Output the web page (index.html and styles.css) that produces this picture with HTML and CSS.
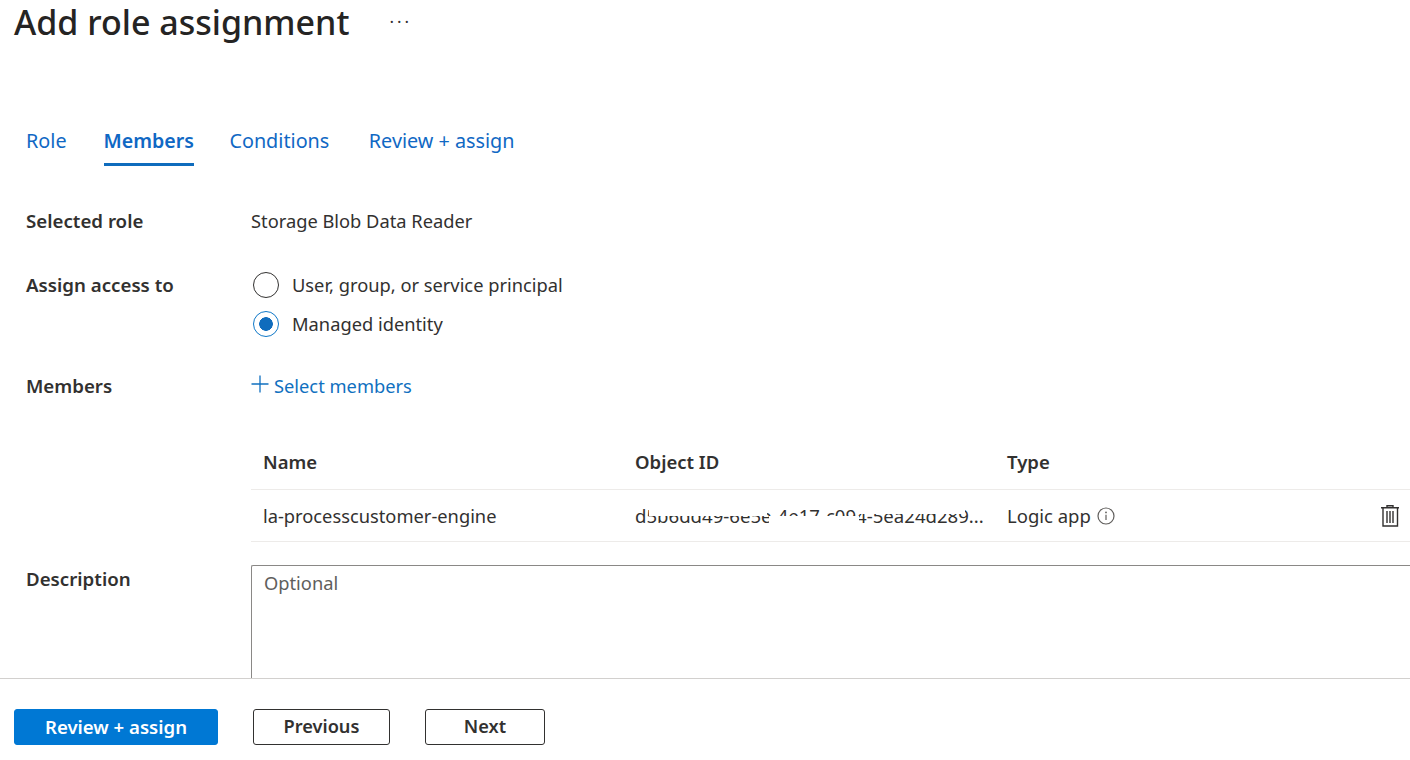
FILE: index.html
```html
<!DOCTYPE html>
<html lang="en">
<head>
<meta charset="utf-8">
<title>Add role assignment</title>
<link rel="stylesheet" href="styles.css">
</head>
<body>
<div class="page">
  <main class="main">
    <header class="title-row">
      <h1 class="title">Add role assignment</h1>
      <span class="more">···</span>
    </header>
    <nav class="tabs">
      <a class="tab">Role</a>
      <a class="tab active">Members</a>
      <a class="tab tab-conditions">Conditions</a>
      <a class="tab">Review + assign</a>
    </nav>
    <div class="form">
      <div class="row">
        <div class="label">Selected role</div>
        <div class="value">Storage Blob Data Reader</div>
      </div>
      <div class="row row-access">
        <div class="label">Assign access to</div>
        <div class="radios">
          <div class="radio-item"><span class="radio"></span><span class="value">User, group, or service principal</span></div>
          <div class="radio-item"><span class="radio checked"></span><span class="value">Managed identity</span></div>
        </div>
      </div>
      <div class="row row-members">
        <div class="label">Members</div>
        <a class="select-link">
          <svg class="plus" viewBox="0 0 18 18" width="18" height="18"><path d="M9 0.5V17.5M0.5 9H17.5" stroke="#1070c0" stroke-width="1.3" fill="none"/></svg>
          <span>Select members</span>
        </a>
      </div>
      <div class="table">
        <div class="tr th">
          <div class="cell">Name</div>
          <div class="cell">Object ID</div>
          <div class="cell">Type</div>
        </div>
        <div class="tr">
          <div class="cell">la-processcustomer-engine</div>
          <div class="cell oid"><span class="oid-text">d5b6dd49-6e5e-4e17-c094-5ea24d289...</span><i class="wipe wipe-a"></i><i class="wipe wipe-b"></i><i class="wipe wipe-c"></i></div>
          <div class="cell type">Logic app
            <svg class="info" viewBox="0 0 18 18" width="18" height="18"><circle cx="9" cy="9" r="8" stroke="#605e5c" stroke-width="1.2" fill="none"/><path d="M9 7.8V13" stroke="#605e5c" stroke-width="1.2"/><circle cx="9" cy="5.4" r="0.9" fill="#605e5c"/></svg>
          </div>
          <svg class="trash" viewBox="0 0 20 22" width="20" height="22"><path d="M1 2.8H19M7 2.8V0.7H13V2.8M3 2.8V21H17.5V2.8M7 6V18M10 6V18M13 6V18" stroke="#323130" stroke-width="1.4" fill="none"/></svg>
        </div>
      </div>
      <div class="row row-desc">
        <div class="label label-desc">Description</div>
        <div class="textarea">Optional</div>
      </div>
    </div>
  </main>
  <footer class="footer">
    <button class="btn primary">Review + assign</button>
    <button class="btn prev">Previous</button>
    <button class="btn next">Next</button>
  </footer>
</div>
</body>
</html>
```
FILE: styles.css
```css
* { box-sizing: border-box; }
html, body { margin: 0; height: 100%; background: #fff; }
body { font-family: "Noto Sans", "Open Sans", "Liberation Sans", sans-serif; color: #323130; font-size: 18.3px; overflow: hidden; }
.page { height: 760px; display: flex; flex-direction: column; }
.main { flex: 1; min-height: 0; overflow: hidden; }
.title-row { display: flex; align-items: center; height: 45px; padding-left: 14px; }
.title { margin: 0; font-size: 34px; font-weight: 500; line-height: 45px; color: #252423; }
.more { margin-left: 40px; margin-top: -3px; font-size: 17px; line-height: 1; letter-spacing: 3px; }
.tabs { display: flex; gap: 37px; padding-left: 26px; margin-top: 76px; height: 45px; }
.tab { color: #1068c4; font-size: 19.8px; line-height: 40px; height: 45px; }
.tab.active { font-size: 19.6px; font-weight: 600; border-bottom: 3px solid #0f6cbd; margin-right: -1.5px; }
.tab-conditions { margin-right: 2.5px; }
.form { padding-left: 26px; margin-top: 42px; }
.row { display: grid; grid-template-columns: 225px 1fr; }
.label { font-weight: 600; line-height: 26px; font-size: 18.7px; }
.value { line-height: 26px; }
.row-access { margin-top: 38px; }
.radios { display: flex; flex-direction: column; gap: 13px; }
.radio-item { display: flex; align-items: center; gap: 13px; }
.radio { width: 26px; height: 26px; border-radius: 50%; border: 1.3px solid #323130; margin-left: 2px; background: #fff; display: block; }
.radio.checked { border-color: #0f78c8; background: radial-gradient(circle, #0f6cbd 0 6.5px, #fff 7.1px); }
.row-members { margin-top: 36px; }
.select-link { display: flex; align-items: center; color: #1070c0; line-height: 26px; gap: 5px; }
.plus { margin-top: -4px; }
.table { margin-left: 225px; margin-top: 38px; }
.tr { display: grid; grid-template-columns: 372px 372px 372px 1fr; align-items: center; height: 52px; padding-left: 12px; border-bottom: 1px solid #edebe9; }
.th { font-weight: 600; font-size: 18.5px; height: 53px; padding-bottom: 2px; }
.cell { line-height: 26px; white-space: nowrap; }
.oid { position: relative; overflow: hidden; font-size: 18.6px; }
.wipe { position: absolute; background: #fff; }
.wipe-a { left: 14px; width: 118px; top: 0; height: 13px; }
.wipe-b { left: 134px; width: 90px; top: 13px; height: 13px; }
.wipe-c { left: 224px; width: 106px; top: 0; height: 11px; }
.type { display: flex; align-items: center; gap: 6px; font-size: 18.5px; }
.trash { justify-self: end; margin-right: 10px; }
.row-desc { margin-top: 23px; }
.label-desc { padding-top: 1px; }
.textarea { height: 140px; border: 1px solid #8a8886; border-right: 0; padding: 4px 12px; color: #605e5c; line-height: 26px; border-radius: 2px 0 0 0; }
.footer { flex: none; height: 82px; border-top: 1px solid #d2d0ce; display: flex; align-items: flex-start; padding: 30px 0 0 14px; gap: 35px; background: #fff; }
.btn { height: 36px; font: inherit; border-radius: 3px; border: 1px solid #323130; background: #fff; color: #323130; padding: 0 0 2px; font-weight: 600; font-size: 18.2px; }
.primary { width: 204px; background: #0078d4; border-color: #0078d4; color: #fff; font-size: 18.6px; }
.prev { width: 137px; }
.next { width: 120px; }
```
